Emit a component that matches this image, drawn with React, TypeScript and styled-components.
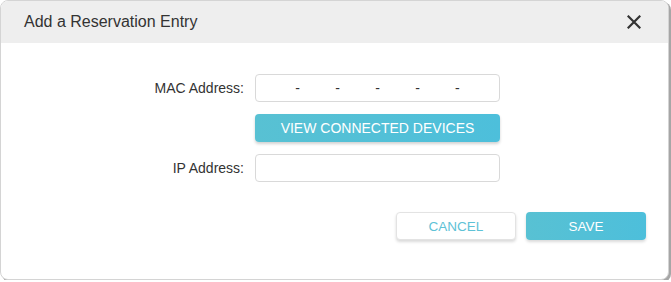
import React from "react";
import styled, { createGlobalStyle } from "styled-components";

const GlobalStyle = createGlobalStyle`
  body {
    margin: 0;
    background: #ffffff;
    font-family: "Liberation Sans", Arial, sans-serif;
  }
`;

const macParts = ["", "", "", "", "", ""];

const App = () => {
  return (
    <>
      <GlobalStyle />
      <StyledDialog>
        <StyledHeader>
          <StyledTitle>Add a Reservation Entry</StyledTitle>
          <StyledClose aria-label="close">
            <svg width="14" height="14" viewBox="0 0 14 14">
              <path
                d="M1.5 1.5 L12.5 12.5 M12.5 1.5 L1.5 12.5"
                stroke="#333"
                strokeWidth="2.2"
                strokeLinecap="square"
              />
            </svg>
          </StyledClose>
        </StyledHeader>
        <StyledBody>
          <StyledForm>
            <StyledLabel>MAC Address:</StyledLabel>
            <StyledMacBox>
              {macParts.map((v, i) => (
                <React.Fragment key={i}>
                  {i > 0 && <StyledDash>-</StyledDash>}
                  <StyledMacPart defaultValue={v} />
                </React.Fragment>
              ))}
            </StyledMacBox>

            <span />
            <StyledWideButton>VIEW CONNECTED DEVICES</StyledWideButton>

            <StyledLabel>IP Address:</StyledLabel>
            <StyledTextInput />
          </StyledForm>
          <StyledFooter>
            <StyledButton $primary={false}>CANCEL</StyledButton>
            <StyledButton $primary>SAVE</StyledButton>
          </StyledFooter>
        </StyledBody>
      </StyledDialog>
    </>
  );
};

const StyledDialog = styled.div`
  box-sizing: border-box;
  width: 669px;
  height: 280px;
  background: #fff;
  border: 1px solid #d4d4d4;
  border-radius: 8px;
  box-shadow: 2px 2px 0 #a6a6a6;
  overflow: hidden;
`;

const StyledHeader = styled.div`
  display: flex;
  align-items: center;
  justify-content: space-between;
  height: 42px;
  padding: 0 24px 0 23px;
  background-color: #eeeeee;
`;

const StyledTitle = styled.span`
  font-size: 16px;
  color: #333;
`;

const StyledClose = styled.button`
  display: flex;
  align-items: center;
  justify-content: center;
  width: 20px;
  height: 20px;
  padding: 0;
  border: 0;
  background: none;
  cursor: pointer;
`;

const StyledBody = styled.div`
  padding-top: 31px;
`;

const StyledForm = styled.div`
  display: grid;
  grid-template-columns: 243px 245px;
  column-gap: 11px;
  row-gap: 12px;
  align-items: center;
`;

const StyledLabel = styled.label`
  text-align: right;
  font-size: 14px;
  color: #333;
`;

const StyledMacBox = styled.div`
  box-sizing: border-box;
  display: flex;
  align-items: center;
  height: 28px;
  border: 1px solid #d9d9d9;
  border-radius: 4px;
  padding: 0 4px;
`;

const StyledMacPart = styled.input`
  flex: 1;
  min-width: 0;
  height: 24px;
  border: 0;
  outline: none;
  padding: 0;
  background: transparent;
  text-align: center;
  font-family: inherit;
  font-size: 14px;
`;

const StyledDash = styled.span`
  font-size: 14px;
  color: #333;
`;

const StyledTextInput = styled.input`
  box-sizing: border-box;
  height: 28px;
  border: 1px solid #d9d9d9;
  border-radius: 4px;
  padding: 0 8px;
  outline: none;
  font-family: inherit;
  font-size: 14px;
`;

const StyledWideButton = styled.button`
  height: 28px;
  border: 0;
  border-radius: 4px;
  background: linear-gradient(90deg, #58c1d3, #4dbfdb);
  box-shadow: 0 2px 3px rgba(0, 0, 0, 0.18);
  color: #fff;
  font-family: inherit;
  font-size: 14px;
  cursor: pointer;
`;

const StyledFooter = styled.div`
  display: flex;
  justify-content: flex-end;
  gap: 10px;
  padding: 30px 22px 0 0;
`;

const StyledButton = styled.button<{ $primary: boolean }>`
  box-sizing: border-box;
  width: 120px;
  height: 28px;
  border-radius: 4px;
  border: ${(p) => (p.$primary ? "0" : "1px solid #e3e3e3")};
  background: ${(p) =>
    p.$primary ? "linear-gradient(90deg, #58c1d3, #4dbfdb)" : "#fff"};
  box-shadow: 0 2px 3px rgba(0, 0, 0, 0.15);
  color: ${(p) => (p.$primary ? "#fff" : "#5ec2d6")};
  font-family: inherit;
  font-size: 13.5px;
  cursor: pointer;
`;

export default App;
